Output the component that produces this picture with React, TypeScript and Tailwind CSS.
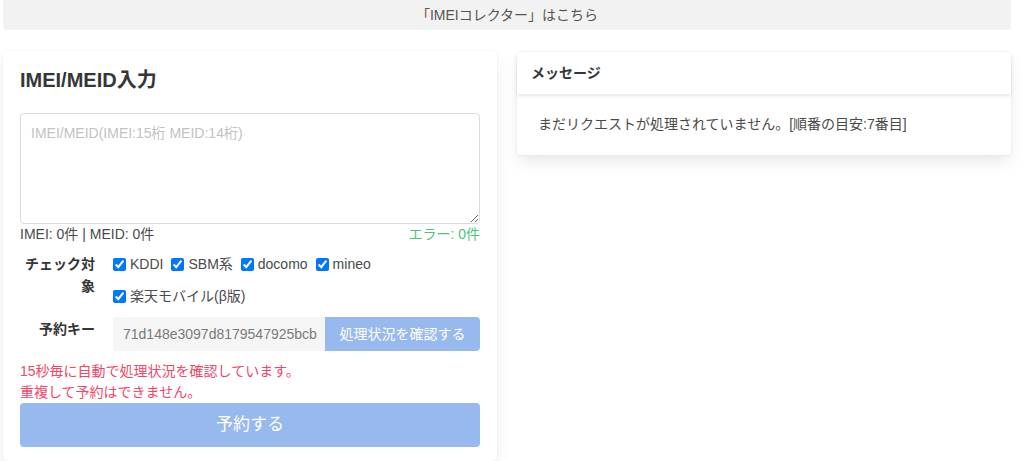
const carriers = ["KDDI", "SBM系", "docomo", "mineo", "楽天モバイル(β版)"];

const font = "font-['Liberation_Sans','Noto_Sans_CJK_JP',sans-serif]";

function Check({ label }: { label: string }) {
  return (
    <label className="inline-flex items-center gap-[4px] mr-[8px] h-[32px]">
      <input type="checkbox" defaultChecked className="w-[13px] h-[13px] accent-[#0075ff]" />
      <span>{label}</span>
    </label>
  );
}

export default function App() {
  return (
    <div className={`${font} bg-white text-[#4a4a4a] text-[14px] w-[1024px] h-[461px] overflow-hidden`}>
      <div className="ml-[3px] w-[1008px]">
        {/* ─── Top notice ─────────────────────────────── */}
        <div className="h-[30px] bg-[#f2f2f2] rounded-b-[4px] flex items-center justify-center text-[#555]">
          「IMEIコレクター」はこちら
        </div>

        <div className="flex gap-[20px] mt-[21px] items-start">
          {/* ─── Input card ─────────────────────────────── */}
          <div className="w-[494px] bg-white rounded-[5px] shadow-[0_8px_16px_-2px_rgba(10,10,10,0.1),0_0_0_1px_rgba(10,10,10,0.02)] px-[17px] pt-[15px] pb-[14px]">
            <h1 className="text-[20px] font-bold text-[#363636] leading-[28px]">IMEI/MEID入力</h1>
            <textarea
              placeholder="IMEI/MEID(IMEI:15桁 MEID:14桁)"
              className="mt-[19px] block w-[460px] h-[111px] border border-[#dbdbdb] rounded-[4px] px-[10px] py-[9px] placeholder:text-[#c2c2c2] outline-none"
            />
            <div className="flex justify-between leading-[20px]">
              <span className="text-[#4a4a4a]">IMEI: 0件 | MEID: 0件</span>
              <span className="text-[#48c774]">エラー: 0件</span>
            </div>

            <div className="flex mt-[6px]">
              <div className="w-[75px] text-right font-bold text-[#363636] leading-[22px] pt-[3px] pl-[2px]">
                チェック対象
              </div>
              <div className="ml-[18px] w-[367px] flex flex-wrap -mt-[2px]">
                {carriers.map((c) => (
                  <Check key={c} label={c} />
                ))}
              </div>
            </div>

            <div className="flex mt-[5px]">
              <div className="w-[75px] text-right font-bold text-[#363636] pt-[2px]">予約キー</div>
              <div className="ml-[18px] flex h-[34px]">
                <div className="w-[212px] bg-[#f5f5f5] rounded-l-[4px] flex items-center px-[10px] text-[#7a7a7a]">
                  71d148e3097d8179547925bcb
                </div>
                <button className="w-[155px] bg-[#3273dc]/50 text-white rounded-r-[4px]">
                  処理状況を確認する
                </button>
              </div>
            </div>

            <div className="mt-[10px] text-[#f14668] leading-[21px]">
              <p>15秒毎に自動で処理状況を確認しています。</p>
              <p>重複して予約はできません。</p>
            </div>
            <button className="w-[460px] h-[44px] rounded-[4px] bg-[#3273dc]/50 text-white text-[17px]">
              予約する
            </button>
          </div>

          {/* ─── Message card ───────────────────────────── */}
          <div className="w-[494px] mt-[1px] bg-white rounded-[5px] shadow-[0_8px_16px_-2px_rgba(10,10,10,0.1),0_0_0_1px_rgba(10,10,10,0.02)]">
            <div className="h-[42px] flex items-center px-[14px] font-bold text-[#363636] shadow-[0_2px_4px_rgba(10,10,10,0.1)]">
              メッセージ
            </div>
            <div className="px-[21px] py-[20px] leading-[21px]">
              まだリクエストが処理されていません。[順番の目安:7番目]
            </div>
          </div>
        </div>
      </div>
    </div>
  );
}
